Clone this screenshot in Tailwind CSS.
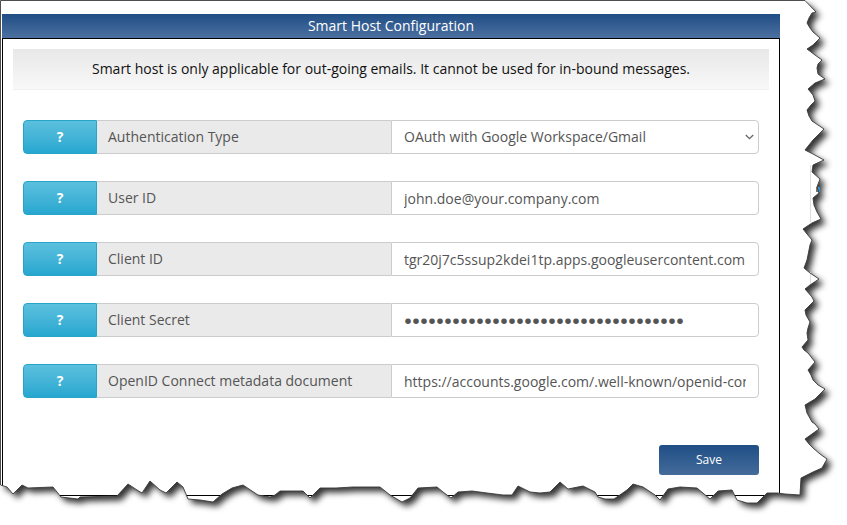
<!doctype html>
<html lang="en">
<head>
<meta charset="utf-8">
<script src="https://cdn.jsdelivr.net/npm/@tailwindcss/browser@4"></script>
<title>Smart Host Configuration</title>
</head>
<body class="relative h-[525px] w-[847px] overflow-hidden bg-white font-['Open_Sans',sans-serif] text-sm text-[#555]">
  <div class="ml-[2px] pt-[14px] w-[778px]">
    <div class="h-[24px] bg-gradient-to-b from-[#1f4e85] to-[#4c70a0] text-center text-sm leading-[24px] text-white">Smart Host Configuration</div>
    <div class="h-[458px] border border-black px-[10px] pt-[10px]">
      <div class="flex h-[41px] items-center justify-center border-b border-[#f0f0f0] bg-gradient-to-b from-[#e8e8e8] to-[#f8f8f8] text-sm text-[#111]">Smart host is only applicable for out-going emails. It cannot be used for in-bound messages.</div>
      <div class="mt-[30px] flex flex-col gap-[27px] px-[10px]">
        <div class="flex h-[34px]">
          <button class="w-[74px] rounded-l-[4px] border border-[#28a4c9] bg-gradient-to-b from-[#5bc0de] to-[#25a7d0] text-center font-bold text-white">?</button>
          <div class="flex w-[294px] items-center border-y border-[#ccc] bg-[#eaeaea] pl-[11px]">Authentication Type</div>
          <div class="relative w-[368px]">
            <select class="h-[34px] w-full appearance-none rounded-r-[4px] border border-[#ccc] bg-white pl-[12px] pr-[24px] text-[#555]"><option>OAuth with Google Workspace/Gmail</option></select>
            <svg class="pointer-events-none absolute right-[5px] top-[14px]" width="9" height="6" viewBox="0 0 9 6" fill="none"><path d="M.8 1L4.5 4.7L8.2 1" stroke="#666" stroke-width="1.3"/></svg>
          </div>
        </div>
        <div class="flex h-[34px]">
          <button class="w-[74px] rounded-l-[4px] border border-[#28a4c9] bg-gradient-to-b from-[#5bc0de] to-[#25a7d0] text-center font-bold text-white">?</button>
          <div class="flex w-[294px] items-center border-y border-[#ccc] bg-[#eaeaea] pl-[11px]">User ID</div>
          <input class="h-[34px] w-[368px] rounded-r-[4px] border border-[#ccc] bg-white px-[12px] text-[#555]" value="john.doe@your.company.com">
        </div>
        <div class="flex h-[34px]">
          <button class="w-[74px] rounded-l-[4px] border border-[#28a4c9] bg-gradient-to-b from-[#5bc0de] to-[#25a7d0] text-center font-bold text-white">?</button>
          <div class="flex w-[294px] items-center border-y border-[#ccc] bg-[#eaeaea] pl-[11px]">Client ID</div>
          <input class="h-[34px] w-[368px] rounded-r-[4px] border border-[#ccc] bg-white px-[12px] text-[#555]" value="tgr20j7c5ssup2kdei1tp.apps.googleusercontent.com">
        </div>
        <div class="flex h-[34px]">
          <button class="w-[74px] rounded-l-[4px] border border-[#28a4c9] bg-gradient-to-b from-[#5bc0de] to-[#25a7d0] text-center font-bold text-white">?</button>
          <div class="flex w-[294px] items-center border-y border-[#ccc] bg-[#eaeaea] pl-[11px]">Client Secret</div>
          <input class="h-[34px] w-[368px] rounded-r-[4px] border border-[#ccc] bg-white px-[12px] font-['Liberation_Sans',sans-serif] text-[13.25px] text-[#555]" value="●●●●●●●●●●●●●●●●●●●●●●●●●●●●●●●●●●●">
        </div>
        <div class="flex h-[34px]">
          <button class="w-[74px] rounded-l-[4px] border border-[#28a4c9] bg-gradient-to-b from-[#5bc0de] to-[#25a7d0] text-center font-bold text-white">?</button>
          <div class="flex w-[294px] items-center border-y border-[#ccc] bg-[#eaeaea] pl-[11px]">OpenID Connect metadata document</div>
          <input class="h-[34px] w-[368px] rounded-r-[4px] border border-[#ccc] bg-white px-[12px] text-[#555]" value="https://accounts.google.com/.well-known/openid-configuration">
        </div>
        <div class="mt-[20px] flex justify-end">
          <button class="h-[30px] w-[100px] rounded-[3px] bg-gradient-to-b from-[#1f4e85] to-[#446c9b] text-xs text-white">Save</button>
        </div>
      </div>
    </div>
  </div>

  <svg class="absolute left-0 top-0" width="847" height="525" viewBox="0 0 847 525" fill="none">
    <defs>
      <filter id="soft" x="-5%" y="-5%" width="110%" height="110%"><feGaussianBlur stdDeviation="3.2"/></filter>
      <path id="edge" d="M.5 .5H805L816 12L812 13L809 18L807 23L810 28L813 32L820 38L813 45L807 49L815 55L822 60L818 64L817 68L818 74L825 79L815 83L808 89L813 95L815 101L811 105L807 110L809 116L812 121L818 125L824 129L813 140L805 150L813 154L824 160L813 165L812 172L820 179L817 187L819 193L813 198L814 205L817 212L821 219L812 223L803 229L807 234L812 240L810 245L809 250L808 255L807 260L804 268L810 273L819 279L810 285L805 289L812 297L814 301L805 310L806 315L810 322L808 328L807 333L808 340L802 347L804 350L808 353L815 362L808 370L811 375L813 380L818 385L825 389L815 399L805 405L807 413L812 422L815 424L819 429L805 439L809 444L813 448L820 454L827 459L822 468L813 472L801 478L800 495L785 494L777 493L767 493L757 503L747 503L737 500L732 490L718 491L710 499L697 488L680 487L668 489L660 500L655 495L643 487L633 484L627 490L614 499L605 499L598 497L595 492L583 486L568 489L560 482L550 492L540 493L530 492L518 486L512 495L503 495L487 493L472 491L458 492L451 498L443 492L437 487L418 488L410 498L402 502L390 495L380 487L368 487L353 487L336 488L320 488L310 498L303 491L280 491L275 495L270 497L258 495L243 485L232 488L222 494L213 502L200 500L188 499L183 487L177 482L166 493L160 490L150 481L142 493L137 490L128 484L117 496L80 497L78 499L61 497L53 487L28 488L22 485L13 494L7 487L.5 485Z"/>
      <clipPath id="outside"><path clip-rule="evenodd" d="M0 0H847V525H0Z M.5 .5H805L816 12L812 13L809 18L807 23L810 28L813 32L820 38L813 45L807 49L815 55L822 60L818 64L817 68L818 74L825 79L815 83L808 89L813 95L815 101L811 105L807 110L809 116L812 121L818 125L824 129L813 140L805 150L813 154L824 160L813 165L812 172L820 179L817 187L819 193L813 198L814 205L817 212L821 219L812 223L803 229L807 234L812 240L810 245L809 250L808 255L807 260L804 268L810 273L819 279L810 285L805 289L812 297L814 301L805 310L806 315L810 322L808 328L807 333L808 340L802 347L804 350L808 353L815 362L808 370L811 375L813 380L818 385L825 389L815 399L805 405L807 413L812 422L815 424L819 429L805 439L809 444L813 448L820 454L827 459L822 468L813 472L801 478L800 495L785 494L777 493L767 493L757 503L747 503L737 500L732 490L718 491L710 499L697 488L680 487L668 489L660 500L655 495L643 487L633 484L627 490L614 499L605 499L598 497L595 492L583 486L568 489L560 482L550 492L540 493L530 492L518 486L512 495L503 495L487 493L472 491L458 492L451 498L443 492L437 487L418 488L410 498L402 502L390 495L380 487L368 487L353 487L336 488L320 488L310 498L303 491L280 491L275 495L270 497L258 495L243 485L232 488L222 494L213 502L200 500L188 499L183 487L177 482L166 493L160 490L150 481L142 493L137 490L128 484L117 496L80 497L78 499L61 497L53 487L28 488L22 485L13 494L7 487L.5 485Z"/></clipPath>
    </defs>
    <g clip-path="url(#outside)">
      <rect width="847" height="525" fill="#fff"/>
      <use href="#edge" fill="#000" fill-opacity=".8" transform="translate(4.5 4.5)" filter="url(#soft)"/>
    </g>
    <line x1="810.5" y1="165" x2="810.5" y2="222" stroke="#dedede"/>
    <line x1="810.5" y1="272" x2="810.5" y2="285" stroke="#dedede"/>
    <rect x="817" y="187" width="3" height="5" fill="#2a8fd0"/>
    <rect x="816" y="187" width="1" height="5" fill="#b5651d"/>
    <use href="#edge" stroke="#3a3a3a" stroke-width=".9"/>
  </svg>
</body>
</html>
